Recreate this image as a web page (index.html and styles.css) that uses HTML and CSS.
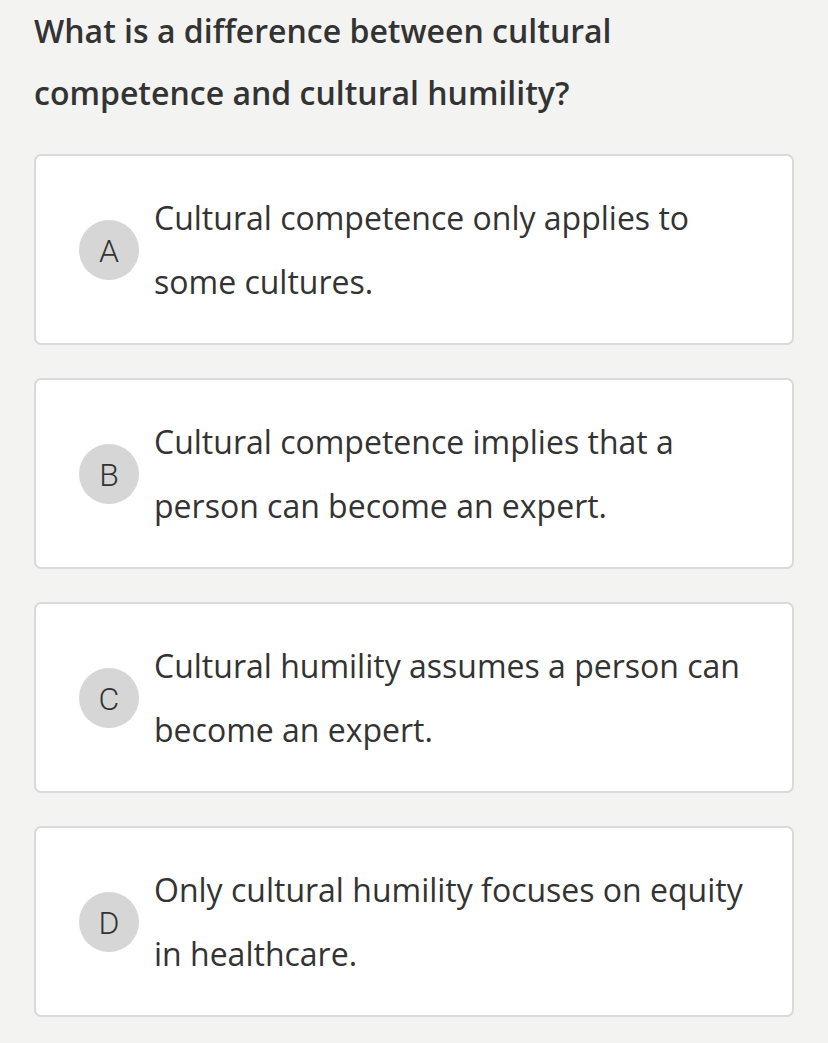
FILE: index.html
```html
<!DOCTYPE html>
<html lang="en">
<head>
<meta charset="utf-8">
<link rel="stylesheet" href="styles.css">
</head>
<body>
<div class="page">
  <h1 class="question">What is a difference between cultural competence and cultural humility?</h1>
  <div class="options">
    <div class="option"><span class="badge">A</span><p class="text">Cultural competence only applies to some cultures.</p></div>
    <div class="option"><span class="badge">B</span><p class="text">Cultural competence implies that a person can become an expert.</p></div>
    <div class="option"><span class="badge">C</span><p class="text">Cultural humility assumes a person can become an expert.</p></div>
    <div class="option"><span class="badge">D</span><p class="text">Only cultural humility focuses on equity in healthcare.</p></div>
  </div>
</div>
</body>
</html>
```
FILE: styles.css
```css
html, body {
  margin: 0;
  padding: 0;
  background: #f3f3f2;
}
body {
  font-family: "Open Sans", "Liberation Sans", sans-serif;
  color: #333333;
}
.page {
  padding: 0 34px;
}
.question {
  margin: 0;
  font-size: 32px;
  font-weight: 600;
  line-height: 62px;
  width: 620px;
  color: #333333;
}
.options {
  margin-top: 30px;
  display: flex;
  flex-direction: column;
  gap: 33px;
}
.option {
  box-sizing: border-box;
  height: 191px;
  background: #ffffff;
  border: 2px solid #dadada;
  border-radius: 7px;
  display: flex;
  align-items: center;
  padding-left: 43px;
}
.badge {
  flex: none;
  width: 60px;
  height: 60px;
  border-radius: 50%;
  background: #d6d6d6;
  display: flex;
  align-items: center;
  justify-content: center;
  padding-top: 3px;
  box-sizing: border-box;
  font-family: Roboto, "Liberation Sans", sans-serif;
  font-weight: 300;
  font-size: 32px;
  line-height: 1;
  color: #333333;
  margin-right: 15px;
}
.text {
  margin: 0;
  width: 600px;
  font-size: 32px;
  line-height: 64px;
}
```
